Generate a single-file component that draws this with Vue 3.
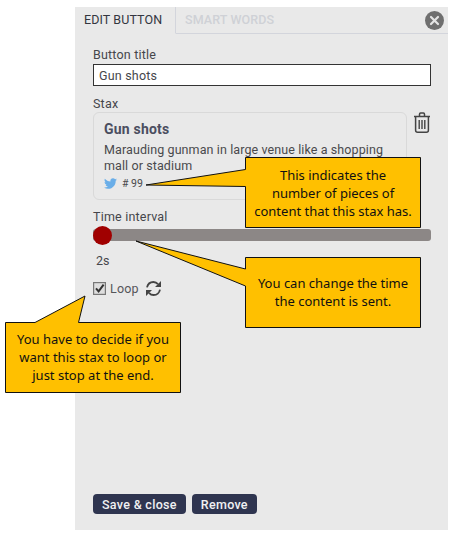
<template>
  <div class="page">
    <div class="panel">
      <div class="tabs">
        <div class="tab active">EDIT BUTTON</div>
        <div class="tab muted">SMART WORDS</div>
        <div class="close">
          <svg width="19" height="19" viewBox="0 0 19 19">
            <circle cx="9.5" cy="9.5" r="9.5" fill="#6f6f6f" />
            <path d="M6 6l7 7M13 6l-7 7" stroke="#e4e4e4" stroke-width="2.2" stroke-linecap="round" />
          </svg>
        </div>
      </div>

      <div class="body">
        <label class="label">Button title</label>
        <input class="title-input" type="text" value="Gun shots" />

        <label class="label stax-label">Stax</label>
        <div class="stax-row">
          <div class="stax-card">
            <div class="stax-name">Gun shots</div>
            <div class="stax-desc">Marauding gunman in large venue like a shopping mall or stadium</div>
            <div class="stax-meta">
              <svg class="bird" width="13" height="13" viewBox="0 0 24 24">
                <path fill="#6aaee8" d="M23.953 4.57a10 10 0 01-2.825.775 4.958 4.958 0 002.163-2.723c-.951.555-2.005.959-3.127 1.184a4.92 4.92 0 00-8.384 4.482C7.69 8.095 4.067 6.13 1.64 3.162a4.822 4.822 0 00-.666 2.475c0 1.71.87 3.213 2.188 4.096a4.904 4.904 0 01-2.228-.616v.06a4.923 4.923 0 003.946 4.827 4.996 4.996 0 01-2.212.085 4.936 4.936 0 004.604 3.417 9.867 9.867 0 01-6.102 2.105c-.39 0-.779-.023-1.17-.067a13.995 13.995 0 007.557 2.209c9.053 0 13.998-7.496 13.998-13.985 0-.21 0-.42-.015-.63A9.935 9.935 0 0024 4.59z" />
              </svg>
              <span># 99</span>
            </div>
          </div>
          <svg class="trash" width="18" height="21" viewBox="0 0 18 21" fill="none" stroke="#444" stroke-width="1.5">
            <path d="M1 4.5h16M6.5 4V2.2c0-.7.4-1.2 1.1-1.2h2.8c.7 0 1.1.5 1.1 1.2V4" />
            <path d="M2.6 4.8v13.4c0 1.2.8 2 2 2h8.8c1.2 0 2-.8 2-2V4.8" />
            <path d="M6.2 8v9M9 8v9M11.8 8v9" stroke-width="1.4" />
          </svg>
        </div>

        <label class="label time-label">Time interval</label>
        <div class="slider">
          <div class="thumb"></div>
        </div>
        <div class="seconds">2s</div>

        <div class="loop-row">
          <span class="checkbox">
            <svg width="13" height="13" viewBox="0 0 13 13">
              <rect x="0.6" y="0.6" width="11.8" height="11.8" fill="#dedede" stroke="#777" stroke-width="1.2" />
              <path d="M3 6.4l2.6 3L10.6 2.6" fill="none" stroke="#333" stroke-width="2" />
            </svg>
          </span>
          <span class="loop-text">Loop</span>
          <svg class="refresh" width="17" height="17" viewBox="0 0 17 17" fill="none" stroke="#444" stroke-width="1.8">
            <path d="M2 7.4C2.7 4.2 5.2 2 8.4 2c1.9 0 3.4.8 4.6 2.2" />
            <path d="M15 9.6c-.7 3.2-3.2 5.4-6.4 5.4-1.9 0-3.4-.8-4.6-2.2" />
            <path d="M16 1v6h-6zM1 16v-6h6z" fill="#444" stroke="none" />
          </svg>
        </div>

        <div class="actions">
          <button class="btn">Save &amp; close</button>
          <button class="btn">Remove</button>
        </div>
      </div>
    </div>

    <!-- callouts sit over the panel -->
    <div v-for="note in notes" :key="note.cls" class="callout" :class="note.cls">
      <svg class="callout-shape" width="449" height="535" viewBox="0 0 449 535">
        <polygon :points="note.points" fill="#ffc000" stroke="#111" stroke-width="1" />
      </svg>
      <p class="callout-text">{{ note.text }}</p>
    </div>
  </div>
</template>

<script setup>
const notes = [
  {
    cls: 'note-count',
    text: 'This indicates the\nnumber of pieces of\ncontent that this stax has.',
    points: '245.5,157.5 420.5,157.5 420.5,227.5 245.5,227.5 245.5,186.5 146,185 245.5,169.5',
  },
  {
    cls: 'note-time',
    text: 'You can change the time\nthe content is sent.',
    points: '245.5,257.5 420.5,257.5 420.5,327.5 245.5,327.5 245.5,286 136,241 245.5,269',
  },
  {
    cls: 'note-loop',
    text: 'You have to decide if you\nwant this stax to loop or\njust stop at the end.',
    points: '5.5,322.5 35,322.5 85,296 78.5,322.5 180.5,322.5 180.5,392.5 5.5,392.5',
  },
]
</script>

<style>
body {
  background: #fff;
}
</style>

<style scoped>
.page {
  position: relative;
  width: 449px;
  height: 535px;
  overflow: hidden;
  font-family: Roboto, "Liberation Sans", sans-serif;
  padding: 7px 1px 5px 75px;
  box-sizing: border-box;
}

.panel {
  height: 100%;
  background-color: #e9e9e9;
  display: flex;
  flex-direction: column;
}

.tabs {
  display: flex;
  align-items: center;
  height: 26px;
  border-bottom: 1px solid #d3d5dc;
  flex-shrink: 0;
}

.tab {
  font-size: 12.5px;
  letter-spacing: 0.1px;
  line-height: 26px;
}

.tab.active {
  width: 101px;
  height: 27px;
  padding-left: 9px;
  box-sizing: border-box;
  color: #33363f;
  border-right: 1px solid #d3d5dc;
  border-bottom: 1px solid #e9e9e9;
}

.tab.muted {
  padding-left: 9px;
  color: #cfd1d6;
  font-weight: 500;
}

.close {
  margin-left: auto;
  margin-right: 4px;
  height: 19px;
}

.body {
  flex: 1;
  display: flex;
  flex-direction: column;
  padding: 13px 17px 16px 18px;
}

.label {
  font-size: 12.5px;
  line-height: 15px;
  color: #45464b;
  letter-spacing: 0.2px;
}

.title-input {
  margin-top: 2px;
  width: 100%;
  height: 22px;
  box-sizing: border-box;
  border: 1px solid #333;
  background: #fff;
  padding: 0 5px;
  font-family: inherit;
  font-size: 12.5px;
  color: #45464b;
  letter-spacing: 0.2px;
  outline: none;
}

.stax-label {
  margin-top: 10px;
}

.stax-row {
  display: flex;
  align-items: flex-start;
  margin-top: 1px;
}

.stax-card {
  width: 314px;
  height: 88px;
  box-sizing: border-box;
  border: 1.5px solid #d9d9d9;
  border-radius: 6px;
  padding: 7px 8px 0 10px;
}

.stax-name {
  font-size: 14px;
  font-weight: 700;
  color: #4b4e60;
  line-height: 18px;
  letter-spacing: 0.2px;
}

.stax-desc {
  margin-top: 4px;
  font-size: 12.5px;
  line-height: 16px;
  color: #4a4a4d;
  letter-spacing: 0.1px;
}

.stax-meta {
  display: flex;
  align-items: center;
  gap: 5px;
  margin-top: 3px;
  font-size: 10.5px;
  color: #4a4a4d;
}

.trash {
  margin: 0 0 0 6px;
}

.time-label {
  margin-top: 9px;
}

.slider {
  margin-top: 5px;
  height: 12px;
  background-color: #8c8786;
  border-radius: 3px;
  display: flex;
  align-items: center;
}

.thumb {
  width: 19px;
  height: 19px;
  flex-shrink: 0;
  border-radius: 50%;
  background-color: #a00000;
}

.seconds {
  margin-top: 12px;
  margin-left: 3px;
  font-size: 12.5px;
  line-height: 15px;
  color: #45464b;
}

.loop-row {
  display: flex;
  align-items: center;
  margin-top: 12px;
  height: 17px;
}

.checkbox {
  display: flex;
  width: 13px;
  height: 13px;
}

.loop-text {
  margin-left: 4px;
  font-size: 12.5px;
  color: #55565a;
  letter-spacing: 0.2px;
}

.refresh {
  margin-left: 6px;
}

.actions {
  margin-top: auto;
  display: flex;
  gap: 6px;
}

.btn {
  height: 20px;
  padding: 0 9px;
  border: none;
  border-radius: 4px;
  background-color: #2f3550;
  color: #f1f1f3;
  font-family: inherit;
  font-size: 12.5px;
  font-weight: 500;
  letter-spacing: 0.3px;
}

.callout {
  position: absolute;
  left: 0;
  top: 0;
}

.callout-shape {
  position: absolute;
  left: 0;
  top: 0;
}

.callout-text {
  position: absolute;
  margin: 0;
  width: 175px;
  text-align: center;
  font-family: "Noto Sans", "Open Sans", sans-serif;
  font-size: 13px;
  line-height: 18px;
  color: #111;
  white-space: pre-line;
}

.note-count .callout-text {
  left: 245.5px;
  top: 166px;
}

.note-time .callout-text {
  left: 245.5px;
  top: 274px;
}

.note-loop .callout-text {
  left: 5.5px;
  top: 330px;
}
</style>
